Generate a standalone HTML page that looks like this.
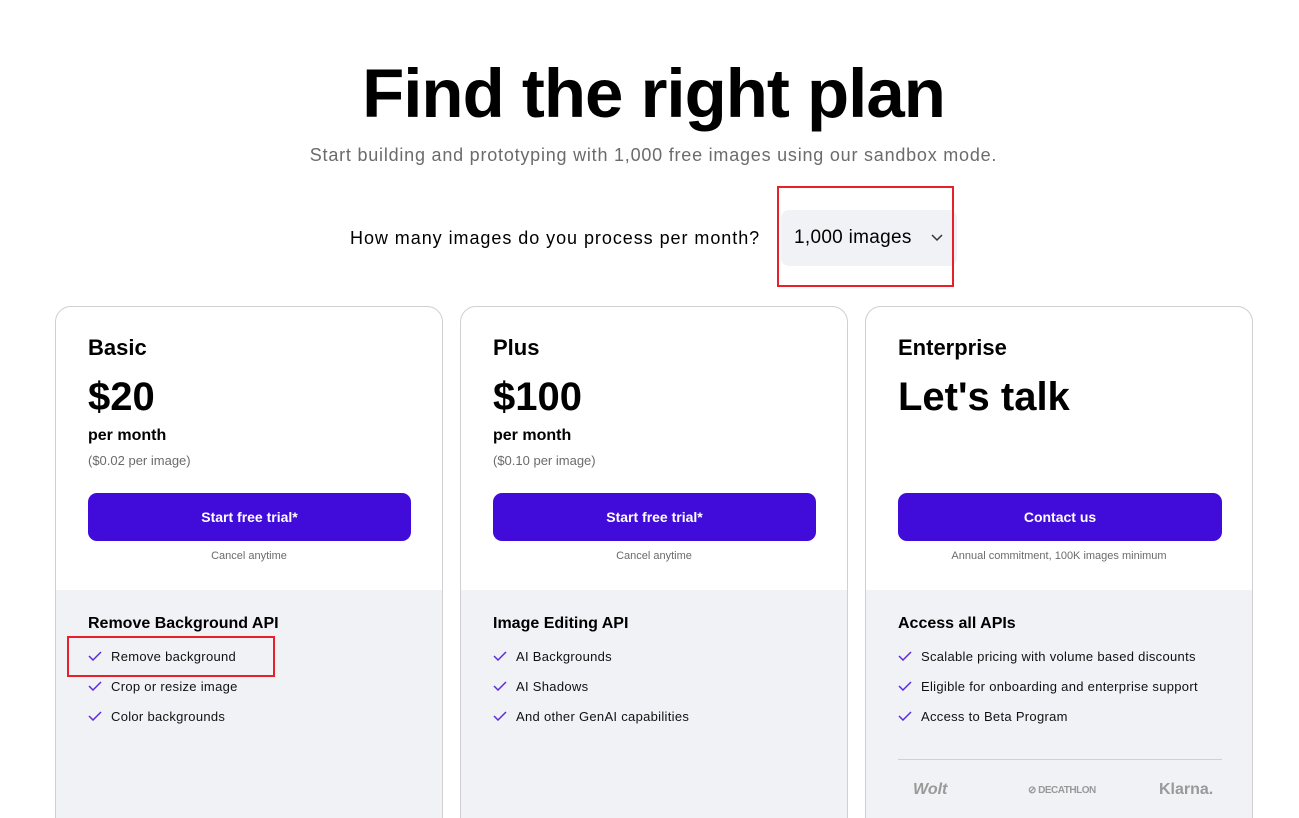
<!DOCTYPE html>
<html><head><style>
*{margin:0;padding:0;box-sizing:border-box}
html,body{width:1299px;height:818px;overflow:hidden}
body{background:#fff;font-family:"Liberation Sans",sans-serif;color:#000;position:relative}
.a{position:absolute}
h1{position:absolute;top:54px;left:0;width:1307px;text-align:center;font-size:69px;font-weight:bold;letter-spacing:-1px}
.sub{top:145px;left:0;width:1307px;text-align:center;font-size:18px;color:#6b6b6b;letter-spacing:0.78px}
.card{position:absolute;top:306px;width:388px;height:530px;border:1px solid #cfcfd4;border-radius:16px;overflow:hidden;background:#fff}
.bot{position:absolute;top:283px;left:0;right:0;bottom:0;background:#f1f2f5}
.t{position:absolute;left:32px;top:28px;font-size:22px;font-weight:bold}
.p{position:absolute;left:32px;top:68px;font-size:40px;font-weight:bold}
.pm{position:absolute;left:32px;top:120px;font-size:16px;font-weight:bold}
.pi{position:absolute;left:32px;top:146px;font-size:13px;color:#6b6b6b}
.btn{position:absolute;left:32px;top:186px;width:323px;height:48px;border-radius:9px;background:#410cd9;color:#fff;font-size:14px;font-weight:bold;text-align:center;line-height:48px}
.c{position:absolute;left:0;width:100%;top:243px;text-align:center;font-size:11px;color:#6b6b6b}
.ft{position:absolute;left:32px;top:308px;font-size:16px;font-weight:bold}
.li{position:absolute;left:32px;font-size:13px;color:#111;letter-spacing:0.3px}
.li svg{position:absolute;left:0;top:2px}
.li span{margin-left:23px}
</style></head><body>
<h1>Find the right plan</h1>
<div class="a sub">Start building and prototyping with 1,000 free images using our sandbox mode.</div>
<div class="a" style="top:228px;left:350px;font-size:18px;letter-spacing:0.95px">How many images do you process per month?</div>
<div class="a" style="left:781px;top:210px;width:176px;height:56px;background:#f1f2f5;border-radius:8px"></div>
<div class="a" style="left:794px;top:227px;font-size:19px;letter-spacing:0.3px">1,000 images</div>
<svg class="a" style="left:931px;top:234px" width="12" height="8"><path d="M1 1l5 5 5-5" fill="none" stroke="#333" stroke-width="1.5"/></svg>
<div class="a" style="left:777px;top:186px;width:177px;height:101px;border:2px solid #e8202a"></div>

<div class="card" style="left:55px">
<div class="bot"></div>
<div class="t">Basic</div><div class="p">$20</div><div class="pm">per month</div><div class="pi">($0.02 per image)</div>
<div class="btn">Start free trial*</div><div class="c">Cancel anytime</div>
<div class="ft">Remove Background API</div>
<div class="li" style="top:342px"><svg width="14" height="10"><path d="M1 5l4 4 8-8" fill="none" stroke="#5a2be0" stroke-width="1.5"/></svg><span>Remove background</span></div>
<div class="li" style="top:372px"><svg width="14" height="10"><path d="M1 5l4 4 8-8" fill="none" stroke="#5a2be0" stroke-width="1.5"/></svg><span>Crop or resize image</span></div>
<div class="li" style="top:402px"><svg width="14" height="10"><path d="M1 5l4 4 8-8" fill="none" stroke="#5a2be0" stroke-width="1.5"/></svg><span>Color backgrounds</span></div>
</div>
<div class="a" style="left:67px;top:636px;width:208px;height:41px;border:2px solid #e8202a"></div>

<div class="card" style="left:460px">
<div class="bot"></div>
<div class="t">Plus</div><div class="p">$100</div><div class="pm">per month</div><div class="pi">($0.10 per image)</div>
<div class="btn">Start free trial*</div><div class="c">Cancel anytime</div>
<div class="ft">Image Editing API</div>
<div class="li" style="top:342px"><svg width="14" height="10"><path d="M1 5l4 4 8-8" fill="none" stroke="#5a2be0" stroke-width="1.5"/></svg><span>AI Backgrounds</span></div>
<div class="li" style="top:372px"><svg width="14" height="10"><path d="M1 5l4 4 8-8" fill="none" stroke="#5a2be0" stroke-width="1.5"/></svg><span>AI Shadows</span></div>
<div class="li" style="top:402px"><svg width="14" height="10"><path d="M1 5l4 4 8-8" fill="none" stroke="#5a2be0" stroke-width="1.5"/></svg><span>And other GenAI capabilities</span></div>
</div>

<div class="card" style="left:865px">
<div class="bot"></div>
<div class="t">Enterprise</div><div class="p">Let's talk</div>
<div class="btn" style="width:324px">Contact us</div><div class="c">Annual commitment, 100K images minimum</div>
<div class="ft">Access all APIs</div>
<div class="li" style="top:342px"><svg width="14" height="10"><path d="M1 5l4 4 8-8" fill="none" stroke="#5a2be0" stroke-width="1.5"/></svg><span>Scalable pricing with volume based discounts</span></div>
<div class="li" style="top:372px"><svg width="14" height="10"><path d="M1 5l4 4 8-8" fill="none" stroke="#5a2be0" stroke-width="1.5"/></svg><span>Eligible for onboarding and enterprise support</span></div>
<div class="li" style="top:402px"><svg width="14" height="10"><path d="M1 5l4 4 8-8" fill="none" stroke="#5a2be0" stroke-width="1.5"/></svg><span>Access to Beta Program</span></div>
<div class="a" style="left:32px;top:452px;width:324px;height:1px;background:#d0d0d5"></div>
<div class="a" style="left:47px;top:474px;font-size:16px;font-weight:bold;font-style:italic;color:#999">Wolt</div>
<div class="a" style="left:162px;top:478px;font-size:10px;font-weight:bold;color:#999;letter-spacing:-0.5px">⊘ DECATHLON</div>
<div class="a" style="left:293px;top:474px;font-size:16px;font-weight:bold;color:#999">Klarna.</div>
</div>
</body></html>
